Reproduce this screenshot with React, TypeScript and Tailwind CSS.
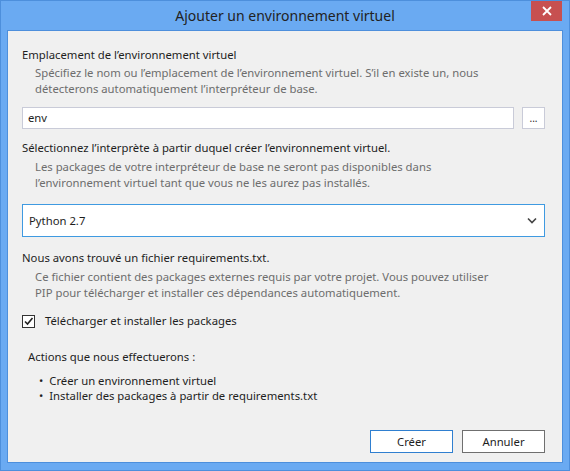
import React from "react";

const font = { fontFamily: '"Noto Sans", "Open Sans", sans-serif' };

const App: React.FC = () => {
  return (
    <div
      className="relative w-[570px] h-[471px] bg-[#6aaaf2] border border-[#4d8fdc] flex flex-col text-[11.3px] text-[#1e1e1e]"
      style={font}
    >
      {/* Barre de titre */}
      <div className="h-[29px] flex items-center justify-center text-[14px] text-[#222]">
        Ajouter un environnement virtuel
      </div>
      <button className="absolute top-0 right-[7px] w-[31px] h-[20px] bg-[#c75050] flex items-center justify-center">
        <svg width="10" height="10" viewBox="0 0 10 10">
          <path d="M1 1 L9 9 M9 1 L1 9" stroke="#fff" strokeWidth="1.8" />
        </svg>
      </button>

      {/* Zone client */}
      <div className="mx-[6px] mb-[7px] flex-1 bg-[#f0f0f0] border border-[#4d8fdc] px-[14px] pt-[16px] leading-[16px]">
        <div>Emplacement de l’environnement virtuel</div>
        <div className="mt-[2px] pl-[13px] text-[#6d6d6d]">
          Spécifiez le nom ou l’emplacement de l’environnement virtuel. S’il en existe un, nous
          <br />
          détecterons automatiquement l’interpréteur de base.
        </div>
        <div className="mt-[10px] flex gap-[8px]">
          <div className="w-[492px] h-[22px] bg-white border border-[#c9cbd8] flex items-center px-[5px]">
            env
          </div>
          <div className="w-[23px] h-[22px] bg-white border border-[#c9cbd8] flex items-center justify-center text-[10px]">
            ...
          </div>
        </div>

        <div className="mt-[11px]">Sélectionnez l’interprète à partir duquel créer l’environnement virtuel.</div>
        <div className="mt-[3px] pl-[13px] text-[#6d6d6d]">
          Les packages de votre interpréteur de base ne seront pas disponibles dans
          <br />
          l’environnement virtuel tant que vous ne les aurez pas installés.
        </div>
        <div className="mt-[13px] w-[523px] h-[33px] bg-white border border-[#3f9ae1] flex items-center justify-between px-[6px]">
          <span>Python 2.7</span>
          <svg width="10" height="7" viewBox="0 0 10 7" className="mr-[1px]">
            <path d="M1 1.5 L5 5.5 L9 1.5" fill="none" stroke="#444" strokeWidth="1.6" />
          </svg>
        </div>

        <div className="mt-[13px]">Nous avons trouvé un fichier requirements.txt.</div>
        <div className="mt-[3px] pl-[13px] text-[#6d6d6d]">
          Ce fichier contient des packages externes requis par votre projet. Vous pouvez utiliser
          <br />
          PIP pour télécharger et installer ces dépendances automatiquement.
        </div>
        <label className="mt-[12px] flex items-center gap-[10px]">
          <span className="w-[13px] h-[13px] bg-white border border-[#333] flex items-center justify-center">
            <svg width="11" height="11" viewBox="0 0 11 11">
              <path d="M2 5.5 L4.5 8 L9.5 2" fill="none" stroke="#222" strokeWidth="1.6" />
            </svg>
          </span>
          <span>Télécharger et installer les packages</span>
        </label>

        <div className="mt-[20px] pl-[6px]">Actions que nous effectuerons :</div>
        <ul className="mt-[8px] pl-[17px] leading-[15px]">
          <li className="flex gap-[6px]">
            <span>•</span>
            <span>Créer un environnement virtuel</span>
          </li>
          <li className="flex gap-[6px]">
            <span>•</span>
            <span>Installer des packages à partir de requirements.txt</span>
          </li>
        </ul>

        <div className="mt-[27px] flex justify-end gap-[9px] pr-[3px]">
          <button className="w-[83px] h-[23px] bg-white border border-[#2f7fd0]">Créer</button>
          <button className="w-[83px] h-[23px] bg-white border border-[#6f6f6f]">Annuler</button>
        </div>
      </div>
    </div>
  );
};

export default App;
